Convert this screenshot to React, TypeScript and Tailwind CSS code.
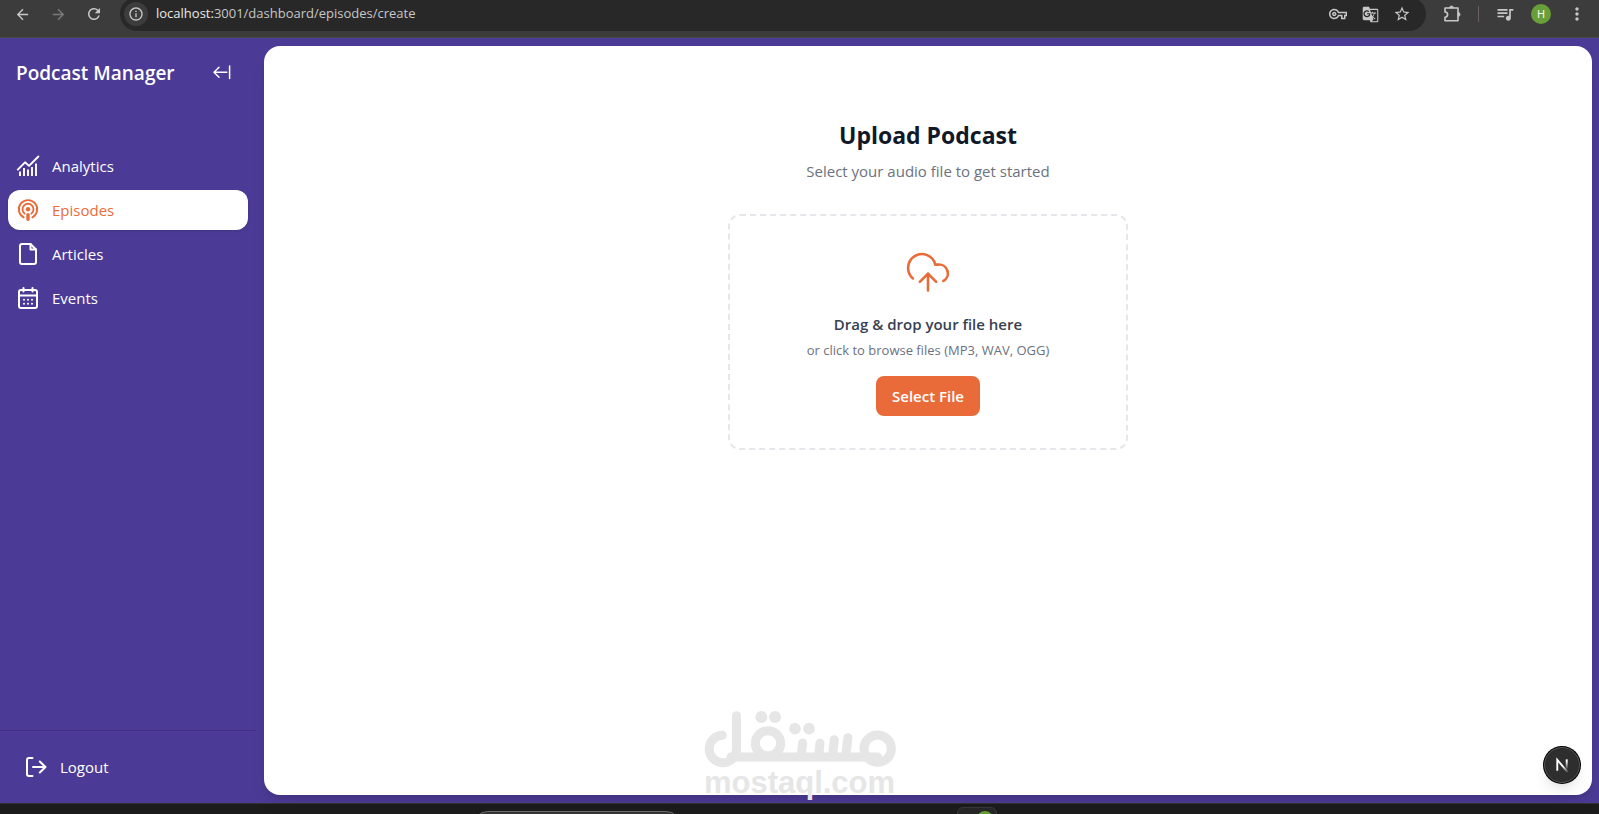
import type { ReactNode } from "react";
import {
  MdArrowBack,
  MdArrowForward,
  MdGTranslate,
  MdInfoOutline,
  MdMoreVert,
  MdOutlineVpnKey,
  MdQueueMusic,
  MdRefresh,
  MdStarOutline,
} from "react-icons/md";

function Icon({ children, width = 2 }: { children: ReactNode; width?: number }) {
  return (
    <svg
      viewBox="0 0 24 24"
      className="size-6 shrink-0"
      fill="none"
      stroke="currentColor"
      strokeWidth={width}
      strokeLinecap="round"
      strokeLinejoin="round"
      aria-hidden="true"
    >
      {children}
    </svg>
  );
}

const navItems = [
  {
    label: "Analytics",
    active: false,
    icon: (
      <Icon width={1.9}>
        <path d="M1.8 15.6 9 8.3l4 3.6 9.4-9.4" />
        <path d="M4 17.5V22M8 14V22M12 15.5v6.5M16 13V22M20 9.5V22" strokeLinecap="butt" />
      </Icon>
    ),
  },
  {
    label: "Episodes",
    active: true,
    icon: (
      <Icon width={1.9}>
        <path d="M7.6 19.4a9.2 9.2 0 1 1 8.8 0" />
        <path d="M8.6 15.6a5.5 5.5 0 1 1 6.8 0" />
        <circle cx="12" cy="11.2" r="2.2" fill="currentColor" stroke="none" />
        <path d="M12 16.6v4.6" strokeWidth="3.4" />
      </Icon>
    ),
  },
  {
    label: "Articles",
    active: false,
    icon: (
      <Icon width={2}>
        <path d="M14.5 2H6a2 2 0 0 0-2 2v16a2 2 0 0 0 2 2h12a2 2 0 0 0 2-2V7.5z" />
        <path d="M14.5 2v5.5H20" />
      </Icon>
    ),
  },
  {
    label: "Events",
    active: false,
    icon: (
      <Icon width={2}>
        <rect x="3" y="4" width="18" height="18" rx="2" />
        <path d="M3 9.5h18M7.5 2v3.5M16.5 2v3.5" />
        <path d="M8 13.8h.01M12 13.8h.01M16 13.8h.01M8 17.8h.01M12 17.8h.01M16 17.8h.01" />
      </Icon>
    ),
  },
];

function BarButton({ label, narrow, children }: { label: string; narrow?: boolean; children: ReactNode }) {
  return (
    <button
      type="button"
      aria-label={label}
      className={`flex shrink-0 items-center justify-center ${narrow ? "w-8" : "w-9"}`}
    >
      {children}
    </button>
  );
}

function BrowserBar() {
  return (
    <header className="flex h-[38px] shrink-0 items-end overflow-hidden border-b border-[#4a4a4a] bg-[#3c3c3c] px-1 pb-1.5 text-[#c7c7c7]">
      <div className="flex h-[34px] w-full items-center">
        <BarButton label="Back"><MdArrowBack size={17} /></BarButton>
        <BarButton label="Forward"><MdArrowForward size={17} className="text-[#7b7b7b]" /></BarButton>
        <BarButton label="Reload"><MdRefresh size={18} /></BarButton>
        <div className="ml-2 flex h-full min-w-0 flex-1 items-center rounded-full bg-[#282828] pr-2 pl-1">
          <button
            type="button"
            aria-label="Site information"
            className="flex size-6 shrink-0 items-center justify-center rounded-full bg-[#3c3c3c]"
          >
            <MdInfoOutline size={16} />
          </button>
          <p className="ml-2 flex-1 truncate text-[13px] text-[#c7c7c7]">
            <span className="text-[#e8e8e8]">localhost:</span>3001/dashboard/episodes/create
          </p>
          <BarButton label="Passwords" narrow><MdOutlineVpnKey size={18} /></BarButton>
          <BarButton label="Translate" narrow><MdGTranslate size={17} /></BarButton>
          <BarButton label="Bookmark" narrow><MdStarOutline size={18} /></BarButton>
        </div>
        <div className="ml-2 flex h-full items-center">
          <BarButton label="Extensions">
            <svg viewBox="0 0 20 20" className="size-5" fill="none" stroke="currentColor" strokeWidth="1.6" strokeLinejoin="round" aria-hidden="true">
              <path d="M3 4h13v12.8H3v-3.6a2.6 2.6 0 0 0 0-5.2z" />
              <path d="M7.4 4a2.1 2.1 0 0 1 4.2 0zM16 8.3a2.1 2.1 0 0 1 0 4.2z" fill="currentColor" strokeWidth="0.6" />
            </svg>
          </BarButton>
          <span className="mx-2 h-4 w-px bg-[#6a6263]" />
          <BarButton label="Media"><MdQueueMusic size={20} /></BarButton>
          <BarButton label="Profile">
            <span className="flex size-5 items-center justify-center rounded-full bg-[#689f38] text-[11px] text-white">H</span>
          </BarButton>
          <BarButton label="Menu"><MdMoreVert size={20} /></BarButton>
        </div>
      </div>
    </header>
  );
}

function Sidebar() {
  return (
    <aside className="flex w-64 shrink-0 flex-col text-white">
      <div className="flex h-[70px] items-center justify-between pr-6 pl-4">
        <h1 className="text-[19px] font-semibold">Podcast Manager</h1>
        <button type="button" aria-label="Collapse sidebar">
          <svg viewBox="0 0 20 20" className="size-5" fill="none" stroke="currentColor" strokeWidth="1.5" strokeLinecap="round" strokeLinejoin="round" aria-hidden="true">
            <path d="M7 4.2 2 9.2l5 5M2.2 9.2h12.6M17.6 3v12.6" />
          </svg>
        </button>
      </div>
      <nav className="mt-[38px] flex flex-1 flex-col gap-1 px-2">
        {navItems.map((item) => (
          <a
            key={item.label}
            href="#"
            className={`flex h-10 items-center gap-3 rounded-xl px-2 ${
              item.active ? "bg-white text-[#ea6b3a] shadow-sm" : "text-white"
            }`}
          >
            {item.icon}
            <span className="text-[15px] font-medium">{item.label}</span>
          </a>
        ))}
      </nav>
      <div className="border-t border-[#412f83] p-4">
        <button type="button" className="flex h-10 items-center gap-3 px-2">
          <Icon width={2}>
            <path d="M8.5 3H5a2 2 0 0 0-2 2v14a2 2 0 0 0 2 2h3.5" />
            <path d="M9 12h12.5M15.8 6.5l5.7 5.5-5.7 5.5" />
          </Icon>
          <span className="text-[15px] font-medium">Logout</span>
        </button>
      </div>
    </aside>
  );
}

function UploadPanel() {
  return (
    <section className="flex w-full flex-col items-center pt-[73px] text-center">
      <h2 className="text-[23px] leading-8 font-bold text-[#111827]">Upload Podcast</h2>
      <p className="mt-2 text-[15px] leading-6 text-[#6b7280]">Select your audio file to get started</p>
      <div className="mt-[31px] flex w-full max-w-[400px] flex-col items-center rounded-xl border-2 border-dashed border-gray-200 p-8">
        <svg viewBox="0 0 48 48" className="size-12 text-[#ea6b3a]" fill="none" stroke="currentColor" strokeWidth="2.6" strokeLinecap="round" strokeLinejoin="round" aria-hidden="true">
          <path d="M8.9 30.4A13.8 13.8 0 1 1 31.3 16.6h3A8.8 8.8 0 0 1 39.4 33" />
          <path d="M24 42.4V25.6M15.8 33.8l8.2-8.2 8.2 8.2" />
        </svg>
        <p className="mt-4 text-[15px] leading-6 font-semibold text-[#374151]">Drag &amp; drop your file here</p>
        <p className="mt-1 text-[13px] leading-5 text-[#6b7280]">or click to browse files (MP3, WAV, OGG)</p>
        <button type="button" className="mt-4 h-10 rounded-lg bg-[#ea6b3a] px-4 text-[15px] font-semibold text-white">
          Select File
        </button>
      </div>
    </section>
  );
}

function Watermark() {
  return (
    <div className="pointer-events-none absolute bottom-4 left-1/2 flex -translate-x-1/2 flex-col items-center text-[#e6e6e6]">
      <svg
        viewBox="69 30 576 170"
        className="w-48"
        fill="none"
        stroke="currentColor"
        strokeWidth="27"
        strokeLinecap="round"
        role="img"
        aria-label="مستقل"
      >
        <path d="M124 103A41 41 0 1 0 166.500 144V44" />
        <path d="M150 168H590" />
        <circle cx="261" cy="127" r="38" />
        <circle cx="590" cy="143" r="41" />
        <path d="M365 126l-5 40M417 126l-4 40M460 116l-6 50M501 110l-7 56" />
        <g fill="currentColor" stroke="none">
          <circle cx="241" cy="48" r="18" />
          <circle cx="282" cy="48" r="18" />
          <circle cx="342" cy="83" r="17.500" />
          <circle cx="384" cy="83" r="17.500" />
        </g>
      </svg>
      <span className="font-['Liberation_Sans',sans-serif] text-[31px] leading-[30px] font-bold">mostaql.com</span>
    </div>
  );
}

export default function App() {
  return (
    <div className="relative flex h-screen flex-col overflow-hidden bg-[#4c3b96] font-['Open_Sans','Noto_Sans',sans-serif]">
      <BrowserBar />
      <div className="flex min-h-0 flex-1">
        <Sidebar />
        <main className="flex min-w-0 flex-1 py-2 pr-[7px] pl-2">
          <div className="relative flex flex-1 rounded-2xl bg-white shadow-lg">
            <UploadPanel />
            <button
              type="button"
              aria-label="Open dev tools"
              className="absolute right-3 bottom-3 flex size-9 items-center justify-center rounded-full border border-[#555] bg-[#2e2e2e] shadow-lg ring-1 ring-black"
            >
              <svg viewBox="0 0 36 36" className="size-9" fill="none" strokeWidth="2" aria-hidden="true">
                <defs>
                  <linearGradient id="stem" x1="0" y1="14" x2="0" y2="23" gradientUnits="userSpaceOnUse">
                    <stop stopColor="#fff" />
                    <stop offset="1" stopColor="#fff" stopOpacity="0" />
                  </linearGradient>
                  <linearGradient id="slash" x1="19" y1="19" x2="24" y2="26" gradientUnits="userSpaceOnUse">
                    <stop stopColor="#fff" />
                    <stop offset="1" stopColor="#fff" stopOpacity="0.1" />
                  </linearGradient>
                </defs>
                <path d="M13 24V12.5L24 25.5" stroke="url(#slash)" />
                <path d="M23 12v11" stroke="url(#stem)" />
              </svg>
            </button>
          </div>
        </main>
      </div>
      <footer className="flex h-[11px] shrink-0 overflow-hidden border-t border-[#333] bg-[#1c1c1c] pl-[29.5%]">
        <span className="mt-[7px] h-8 w-[210px] rounded-full border border-[#6b6b6b] bg-[#333]" />
        <span className="mt-[3px] ml-[275px] flex h-8 w-10 justify-center rounded-md border border-[#383838] bg-[#272727] pl-4">
          <span className="mt-[3px] size-4 rounded-full bg-[#689f38]" />
        </span>
      </footer>
      <Watermark />
    </div>
  );
}
